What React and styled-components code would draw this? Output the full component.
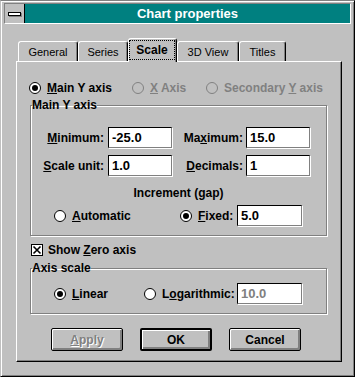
import React from 'react'
import styled, {createGlobalStyle} from 'styled-components'

const Global = createGlobalStyle`
  html, body {
    margin: 0;
    padding: 0;
    background: #c0c0c0;
  }
`

const Win = styled.div`
  width: 355px;
  height: 377px;
  box-sizing: border-box;
  background: #c0c0c0;
  border: 1px solid;
  border-color: #808080 #000 #000 #c0c0c0;
  box-shadow: inset 1px 1px #fff, inset -1px -1px #808080;
  padding: 2px 3px 0 3px;
  font-family: "Liberation Sans", Arial, sans-serif;
  font-size: 12px;
  font-weight: 700;
  color: #000;
`

const TitleBar = styled.div`
  display: flex;
  height: 21px;
  box-sizing: border-box;
  border: 1px solid;
  border-color: #808080 #fff #fff #808080;
`

const SysBox = styled.div`
  width: 20px;
  box-sizing: border-box;
  border-right: 1px solid #000;
  display: flex;
  align-items: center;
  justify-content: center;
  background: #c0c0c0;
`

const SysBar = styled.span`
  width: 11px;
  height: 2px;
  background: #fff;
  border: 1px solid #000;
  box-shadow: 1px 1px #808080;
`

const Caption = styled.div`
  flex: 1;
  background: #008080;
  color: #fff;
  font-size: 13px;
  line-height: 19px;
  text-align: center;
`

const TabStrip = styled.div`
  display: flex;
  align-items: flex-end;
  height: 24px;
  margin: 14px 0 -1px 14px;
  position: relative;
  z-index: 1;
`

const Tab = styled.div`
  width: ${p => p.$w}px;
  height: ${p => (p.$active ? 24 : 20)}px;
  margin-bottom: ${p => (p.$active ? 0 : 1)}px;
  box-sizing: border-box;
  border: 1px solid;
  border-bottom: none;
  border-color: #fff #000 transparent #fff;
  border-radius: 3px 3px 0 0;
  box-shadow: inset -1px 0 #808080;
  background: #c0c0c0;
  display: flex;
  align-items: center;
  justify-content: center;
  font-size: ${p => (p.$active ? 12 : 11)}px;
  font-weight: ${p => (p.$active ? 700 : 400)};
`

const Focus = styled.span`
  align-self: stretch;
  flex: 1;
  margin: 1px 1px 2px 0;
  border: 1px dotted #000;
  display: flex;
  align-items: center;
  justify-content: center;
`

const Panel = styled.div`
  margin-left: 12px;
  width: 326px;
  height: 301px;
  box-sizing: border-box;
  border: 1px solid;
  border-color: #fff #000 #000 #fff;
  box-shadow: inset -1px -1px #808080;
  padding-top: 19px;
  display: flex;
  flex-direction: column;
`

const AxisRow = styled.div`
  display: grid;
  grid-template-columns: 103px 74px auto;
  align-items: center;
  height: 14px;
  padding-left: 12px;
`

const RadioWrap = styled.label`
  display: flex;
  align-items: center;
  gap: 6px;
  width: ${p => (p.$w ? `${p.$w}px` : 'auto')};
  flex: none;
  white-space: nowrap;
  line-height: 14px;
  color: ${p => (p.$disabled ? '#808080' : '#000')};
`

const Group = styled.fieldset`
  margin: ${p => p.$mt}px 14px 0 13px;
  padding: ${p => p.$pt}px 0 ${p => p.$pb}px 0;
  border: 1px solid #808080;
  box-shadow: inset 1px 1px #fff, 1px 1px #fff;
  min-width: 0;
`

const Legend = styled.legend`
  padding: 0;
  margin-left: 1px;
  line-height: 14px;
`

const FieldGrid = styled.div`
  display: grid;
  grid-template-columns: 77px 64px 74px 64px;
  row-gap: 7px;
  align-items: center;
`

const FieldLabel = styled.span`
  text-align: right;
  padding-right: ${p => p.$pr}px;
  white-space: nowrap;
`

const Field = styled.div`
  width: ${p => (p.$w ? `${p.$w}px` : 'auto')};
  height: 21px;
  box-sizing: border-box;
  background: #fff;
  border: 1px solid;
  border-color: #000 #808080 #808080 #000;
  box-shadow: 1px 1px #fff;
  padding-left: 3px;
  font-size: 13px;
  line-height: 19px;
  color: ${p => (p.$disabled ? '#808080' : '#000')};
`

const Caption2 = styled.div`
  margin-top: 10px;
  line-height: 14px;
  text-align: center;
`

const OptionRow = styled.div`
  display: flex;
  align-items: center;
  height: 21px;
  margin-top: ${p => p.$mt || 0}px;
  padding-left: 23px;
`

const CheckRow = styled.label`
  display: flex;
  align-items: center;
  gap: 5px;
  height: 14px;
  margin-top: 7px;
  padding-left: 14px;
`

const ButtonRow = styled.div`
  display: flex;
  gap: 17px;
  margin-top: 14px;
  padding-left: 34px;
`

const Button = styled.button`
  width: 72px;
  height: 23px;
  box-sizing: border-box;
  border: ${p => (p.$default ? 2 : 1)}px solid #000;
  border-radius: 2px;
  background: #c0c0c0;
  box-shadow: inset 1px 1px #fff, inset -1px -1px #808080, inset -2px -2px #808080;
  font-family: inherit;
  font-size: 12px;
  font-weight: 700;
  padding: 0;
  color: ${p => (p.disabled ? '#808080' : '#000')};
  text-shadow: ${p => (p.disabled ? '1px 1px #fff' : 'none')};
`

const Radio = ({checked, disabled, w, children}) => (
  <RadioWrap $w={w} $disabled={disabled}>
    <svg width="12" height="12" viewBox="0 0 12 12">
      <circle cx="6" cy="6" r="5.5" fill={disabled ? '#c0c0c0' : '#fff'} stroke={disabled ? '#808080' : '#000'} />
      {checked && <circle cx="6" cy="6" r="3" fill="#000" />}
    </svg>
    <span>{children}</span>
  </RadioWrap>
)

const tabs = [
  {label: 'General', w: 60},
  {label: 'Series', w: 50},
  {label: 'Scale', w: 49, active: true},
  {label: '3D View', w: 62},
  {label: 'Titles', w: 47},
]

export default function App() {
  return (
    <>
      <Global />
      <Win>
        <TitleBar>
          <SysBox><SysBar /></SysBox>
          <Caption>Chart properties</Caption>
        </TitleBar>

        <TabStrip>
          {tabs.map(t => (
            <Tab key={t.label} $w={t.w} $active={t.active}>
              {t.active ? <Focus>{t.label}</Focus> : t.label}
            </Tab>
          ))}
        </TabStrip>

        <Panel>
          <AxisRow>
            <Radio checked><u>M</u>ain Y axis</Radio>
            <Radio disabled><u>X</u> Axis</Radio>
            <Radio disabled>Secondary <u>Y</u> axis</Radio>
          </AxisRow>

          <Group $mt={3} $pt={15} $pb={9}>
            <Legend>Main Y axis</Legend>
            <FieldGrid>
              <FieldLabel $pr={4}><u>M</u>inimum:</FieldLabel>
              <Field>-25.0</Field>
              <FieldLabel $pr={3}>Ma<u>x</u>imum:</FieldLabel>
              <Field>15.0</Field>
              <FieldLabel $pr={4}><u>S</u>cale unit:</FieldLabel>
              <Field>1.0</Field>
              <FieldLabel $pr={3}><u>D</u>ecimals:</FieldLabel>
              <Field>1</Field>
            </FieldGrid>
            <Caption2>Increment (gap)</Caption2>
            <OptionRow $mt={5}>
              <Radio w={126}><u>A</u>utomatic</Radio>
              <Radio checked w={57}><u>F</u>ixed:</Radio>
              <Field $w={65}>5.0</Field>
            </OptionRow>
          </Group>

          <CheckRow>
            <svg width="12" height="12" viewBox="0 0 12 12">
              <rect x="0.5" y="0.5" width="11" height="11" fill="#fff" stroke="#000" />
              <path d="M2.5 2.5 L9.5 9.5 M9.5 2.5 L2.5 9.5" stroke="#000" strokeWidth="1.6" />
            </svg>
            <span>Show <u>Z</u>ero axis</span>
          </CheckRow>

          <Group $mt={4} $pt={8} $pb={9}>
            <Legend>Axis scale</Legend>
            <OptionRow>
              <Radio checked w={90}><u>L</u>inear</Radio>
              <Radio w={93}>L<u>o</u>garithmic:</Radio>
              <Field $w={65} $disabled>10.0</Field>
            </OptionRow>
          </Group>

          <ButtonRow>
            <Button disabled><u>A</u>pply</Button>
            <Button $default>OK</Button>
            <Button>Cancel</Button>
          </ButtonRow>
        </Panel>
      </Win>
    </>
  )
}
